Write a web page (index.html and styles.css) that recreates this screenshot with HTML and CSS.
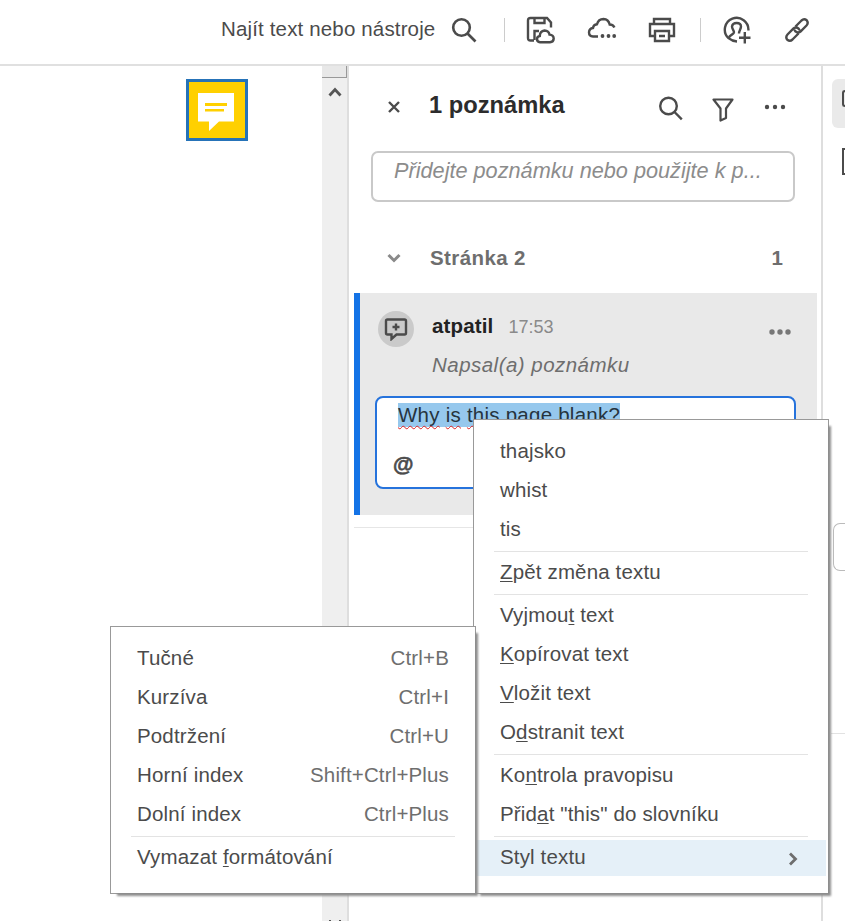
FILE: index.html
```html
<!DOCTYPE html>
<html lang="cs">
<head>
<meta charset="utf-8">
<title>Poznámky</title>
<link rel="stylesheet" href="styles.css">
</head>
<body>
<div class="app">
  <header class="topbar">
    <span class="find">Najít text nebo nástroje</span>
    <svg class="i-search" width="26" height="26" viewBox="0 0 26 26"><circle cx="10.500" cy="10.500" r="8.300"/><path d="M16.500 16.500L24.500 24.500"/></svg>
    <span class="divider d1"></span>
    <svg class="i-save" width="30" height="28" viewBox="0 0 30 28"><path d="M8 24.500H4.500Q2 24.500 2 22V4.500Q2 2 4.500 2H21L25 6.500V11.500M8.500 2V7H18.500V2M8.500 24V15H13"/><path d="M14 26.200Q10.800 26 11 22.800Q11.300 20.300 13.800 20Q14 15 18.500 14.500Q22.800 14.700 23.500 18.600Q27.600 19 27.700 22.600Q27.500 26 24 26.200Z"/></svg>
    <svg class="i-cloud" width="30" height="24" viewBox="0 0 30 24"><path d="M11 20.500H6Q2 20.300 2 16.300Q2.200 12.500 6 12Q6.300 8.700 10 8.200Q11.400 3 16.500 3Q21.500 3.200 22.700 8.500Q26.300 8.500 27.400 11.500"/><g class="dots"><circle cx="15.500" cy="20" r="1.900"/><circle cx="21.500" cy="20" r="1.900"/><circle cx="27.200" cy="20" r="1.900"/></g></svg>
    <svg class="i-print" width="28" height="26" viewBox="0 0 28 26"><path d="M6 6V2H22V6M6 19H2V7H26V19H22M7 14H21V24H7ZM11 19H17"/></svg>
    <span class="divider d2"></span>
    <svg class="i-user" width="28" height="28" viewBox="0 0 28 28"><path d="M14 25.500Q9 25.200 5.500 22.200A11.800 11.800 0 1 1 25.400 14.500"/><path d="M5.800 22C6.500 18.500 11 18.800 11 16.300C11 14.500 9 13 9 10.500Q9.500 7 13.700 7Q17.800 7 18 10.500C18 13 16 14.500 16 17.500M21.800 16V27.500M16 21.700H27.500"/></svg>
    <svg class="i-link" width="26" height="26" viewBox="0 0 26 26"><path d="M11.500 9.500L17.500 3.500Q20 1.200 22.700 3.300Q24.800 6 22.500 8.500L16.500 14.500Q14 16.500 11.300 14.300Q10.600 13.500 10.500 12.500M14.500 16.500L8.500 22.500Q6 24.800 3.300 22.700Q1.200 20 3.500 17.500L9.500 11.500Q12 9.500 14.700 11.700Q15.400 12.500 15.500 13.500"/></svg>
  </header>

  <div class="workspace">
    <main class="page">
      <div class="note-pin"><svg width="38" height="40" viewBox="0 0 38 40"><path fill="#fff" d="M1 2H37V30.500H22L12 40V30.500H1Z"/><path fill="#ffd000" d="M8 12H30V15H8ZM8 18H27V20.500H8Z"/></svg></div>
    </main>
    <div class="scrollbar">
      <div class="splitter"></div>
      <svg width="14" height="10" viewBox="0 0 14 10"><path d="M1.500 8.500L7 2.500L12.500 8.500"/></svg>
      <div class="scroll-end"><i></i><i></i></div>
    </div>
    <aside class="panel">
      <div class="panel-head">
        <svg class="i-close" width="12" height="12" viewBox="0 0 12 12"><path d="M1 1L11 11M11 1L1 11"/></svg>
        <h1>1 poznámka</h1>
        <svg class="i-find" width="25" height="25" viewBox="0 0 25 25"><circle cx="10.500" cy="10" r="8.300"/><path d="M16.500 16L23.800 23.300"/></svg>
        <svg class="i-filter" width="22" height="24" viewBox="0 0 22 24"><path d="M1.500 1.500H20.500L14 10.500V20L8.500 22.500V10.500Z"/></svg>
        <svg class="i-more" width="22" height="6" viewBox="0 0 22 6"><circle cx="3" cy="3" r="2.200"/><circle cx="11" cy="3" r="2.200"/><circle cx="19" cy="3" r="2.200"/></svg>
      </div>
      <div class="add-note">Přidejte poznámku nebo použijte k p...</div>
      <div class="group">
        <svg width="14" height="10" viewBox="0 0 14 10"><path d="M1.500 2L7 7.500L12.500 2"/></svg>
        <h2>Stránka 2</h2>
        <b>1</b>
      </div>
      <article class="comment">
        <div class="comment-head">
          <div class="avatar"><svg width="24" height="24" viewBox="0 0 24 24"><path d="M3.500 2.500H20.500Q22 2.500 22 4V16Q22 17.500 20.500 17.500H12.500L7.500 22V17.500H3.500Q2 17.500 2 16V4Q2 2.500 3.500 2.500ZM12 6.500V13.500M8.500 10H15.500"/></svg></div>
          <div class="who">
            <div class="byline"><strong>atpatil</strong><time>17:53</time></div>
            <div class="action">Napsal(a) poznámku</div>
          </div>
          <svg class="c-more" width="22" height="6" viewBox="0 0 22 6"><circle cx="3" cy="3" r="2.700"/><circle cx="11" cy="3" r="2.700"/><circle cx="19" cy="3" r="2.700"/></svg>
        </div>
        <div class="editor">
          <div class="edit-text"><mark><u>Why</u> <u>is</u> <u>this</u> page blank?</mark></div>
          <div class="mention">@</div>
        </div>
      </article>
      <hr class="end">
    </aside>
    <nav class="rail">
      <div class="rail-active"><i></i></div>
      <div class="rail-item"></div>
      <div class="rail-box"></div>
      <div class="rail-line"></div>
    </nav>
  </div>

  <div class="menu context">
    <div class="row">thajsko</div>
    <div class="row">whist</div>
    <div class="row">tis</div>
    <hr>
    <div class="row"><span><u>Z</u>pět změna textu</span></div>
    <hr>
    <div class="row"><span>Vyjmou<u>t</u> text</span></div>
    <div class="row"><span><u>K</u>opírovat text</span></div>
    <div class="row"><span><u>V</u>ložit text</span></div>
    <div class="row"><span>O<u>d</u>stranit text</span></div>
    <hr>
    <div class="row"><span>Ko<u>n</u>trola pravopisu</span></div>
    <div class="row"><span>Přid<u>a</u>t "this" do slovníku</span></div>
    <hr>
    <div class="row selected"><span>Styl textu</span><svg width="10" height="14" viewBox="0 0 10 14"><path d="M2 1.500L7.500 7L2 12.500"/></svg></div>
  </div>

  <div class="menu submenu">
    <div class="row"><span>Tučné</span><kbd>Ctrl+B</kbd></div>
    <div class="row"><span>Kurzíva</span><kbd>Ctrl+I</kbd></div>
    <div class="row"><span>Podtržení</span><kbd>Ctrl+U</kbd></div>
    <div class="row"><span>Horní index</span><kbd>Shift+Ctrl+Plus</kbd></div>
    <div class="row"><span>Dolní index</span><kbd>Ctrl+Plus</kbd></div>
    <hr>
    <div class="row"><span>Vymazat <u>f</u>ormátování</span></div>
  </div>
</div>
</body>
</html>
```
FILE: styles.css
```css
* { box-sizing: border-box; }
body { margin: 0; background: #fff; color: #4b4b4b; font: 20.5px/24px "Liberation Sans", Arial, sans-serif; letter-spacing: .15px; }
svg { display: block; flex: none; fill: none; stroke: #4b4b4b; stroke-width: 2.4; }
h1, h2 { margin: 0; }

.app { position: relative; width: 845px; height: 921px; overflow: hidden; display: flex; flex-direction: column; }

.topbar { height: 66px; flex: none; display: flex; align-items: center; padding: 0 0 6px 221px; border-bottom: 2px solid #e0e0e0; white-space: nowrap; }
.find { width: 230px; }
.i-search { stroke-width: 2.6; margin-top: 1px; }
.divider { width: 1px; height: 24px; background: #ccc; margin-top: 2px; }
.d1 { margin-right: 21px; margin-left: 27px; }
.i-save { margin-top: 2px; }
.i-cloud { margin: -2px 31px 0 31px; }
.i-print { margin-top: 2px; }
.d2 { margin-right: 22px; margin-left: 24px; }
.i-user { margin-top: 2px; }
.i-link { margin: 2px 0 0 33px; }
.dots { fill: #4b4b4b; stroke: none; }

.workspace { flex: 1; min-height: 0; display: grid; grid-template-columns: 322px 27px 474px 22px; }

.note-pin { width: 62px; height: 62px; margin: 13px 0 0 186px; border: 3px solid #2673b8; background: #ffd000; display: flex; align-items: center; justify-content: center; }
.note-pin svg { stroke: none; margin-bottom: -1px; margin-right: 2px; }

.scrollbar { background: #efefef; border-right: 2px solid #dedede; display: flex; flex-direction: column; align-items: center; }
.splitter { width: 25px; height: 12px; border-right: 1px solid #999; border-bottom: 1px solid #999; background: #e8e8e8; margin-bottom: 9px; }
.scrollbar svg { stroke: #555; stroke-width: 2.8; }
.scroll-end { margin-top: auto; width: 12px; display: flex; justify-content: space-between; }
.scroll-end i { width: 2px; height: 1px; background: #555; }

.panel { border-right: 2px solid #dedede; display: flex; flex-direction: column; }
.panel-head { height: 85px; display: flex; align-items: center; padding-left: 39px; }
.i-close { margin: -3px 29px 0 0; }
h1 { width: 229px; font-size: 23.7px; line-height: 28px; letter-spacing: 0; color: #2c2c2c; margin-top: -8px; }
.i-filter { margin: 2px 0 0 29px; stroke-width: 2.2; stroke-linejoin: round; }
.i-more { margin-left: 30px; fill: #4b4b4b; stroke: none; margin-top: -3px; }
.add-note { width: 424px; height: 51px; margin-left: 22px; border: 2px solid #c9c9c9; border-radius: 7px; padding: 6px 0 0 21px; font-size: 21.7px; letter-spacing: 0; line-height: 24px; font-style: italic; color: #8c8c8c; white-space: nowrap; }
.group { height: 91px; display: flex; align-items: center; padding: 20px 38px 0 38px; color: #6e6e6e; }
.group svg { stroke: #8a8a8a; stroke-width: 3; margin-right: 29px; }
h2 { flex: 1; font-size: 20.5px; letter-spacing: .4px; }
.comment { width: 463px; height: 222px; margin-left: 5px; background: #e9e9e9; border-left: 6px solid #1473e6; }
.comment-head { height: 103px; display: flex; padding: 18px 0 0 18px; }
.avatar { width: 36px; height: 36px; border-radius: 50%; background: #cacaca; display: flex; align-items: center; justify-content: center; margin-right: 18px; }
.who { width: 337px; padding-top: 3px; }
.byline { display: flex; gap: 15px; }
.byline strong { color: #222; }
.byline time { font-size: 18px; color: #8a8a8a; letter-spacing: 0; line-height: 26px; height: 24px; }
.action { margin-top: 15px; font-style: italic; color: #6e6e6e; letter-spacing: .47px; }
.c-more { margin-top: 18px; fill: #777; stroke: none; }
.editor { width: 421px; height: 93px; margin-left: 15px; border: 2px solid #2673dc; border-radius: 8px; background: #fff; padding: 5px 0 0 21px; }
.edit-text { height: 24px; color: #222; letter-spacing: .24px; }
mark { display: inline-block; height: 24px; background: #96c8ed; color: #26343e; }
mark u { text-decoration: underline wavy #d22 1px; text-underline-offset: 3px; text-decoration-skip-ink: none; }
.mention { margin: 25px 0 0 -5px; font-weight: bold; font-size: 21px; -webkit-text-stroke: .6px #4b4b4b; }
.end { width: 463px; margin: 12px 0 0 5px; border: 0; border-top: 1px solid #e6e6e6; }

.rail { overflow: hidden; display: flex; flex-direction: column; align-items: flex-end; }
.rail-active { width: 13px; height: 49px; flex: none; margin-top: 13px; border-radius: 6px 0 0 6px; background: #eaeaea; padding: 11px 0 0 10px; }
.rail-active i { display: block; height: 17px; border: 2px solid #4b4b4b; border-right: 0; border-radius: 4px 0 0 4px; }
.rail-item { width: 3px; height: 27px; flex: none; margin-top: 20px; border: 2px solid #4b4b4b; border-right: 0; }
.rail-box { width: 12px; height: 48px; flex: none; margin-top: 348px; border: 1px solid #bbb; border-right: 0; border-radius: 7px 0 0 7px; }
.rail-line { width: 14px; height: 1px; flex: none; margin-top: 162px; background: #e2e2e2; }

.menu { position: absolute; background: #fff; border: 1px solid #999; padding-top: 12px; }
.menu::before { content: ""; position: absolute; z-index: -1; inset: 6px -3px -3px 6px; background: #8d8d8d; filter: blur(1px); }
.menu::after { content: ""; position: absolute; z-index: -1; inset: 0; background: #fff; }
.context { left: 473px; top: 419px; width: 356px; height: 475px; z-index: 1; }
.submenu { left: 110px; top: 626px; width: 366px; height: 268px; z-index: 2; }
.row { height: 39px; display: flex; align-items: center; justify-content: space-between; padding: 0 26px 2px; white-space: nowrap; }
.row u { text-decoration-thickness: 1px; text-underline-offset: 2px; text-decoration-skip-ink: none; }
.menu hr { height: 1px; margin: 2px 20px 1px; border: 0; background: #e3e3e3; }
.selected { height: 36px; margin: 3px 2px 0 0; padding: 0 28px 2px 26px; background: #e5f0f8; }
.selected svg { stroke: #6e6e6e; stroke-width: 2.8; margin-top: 3px; }
kbd { font: inherit; color: #6e6e6e; }
```
